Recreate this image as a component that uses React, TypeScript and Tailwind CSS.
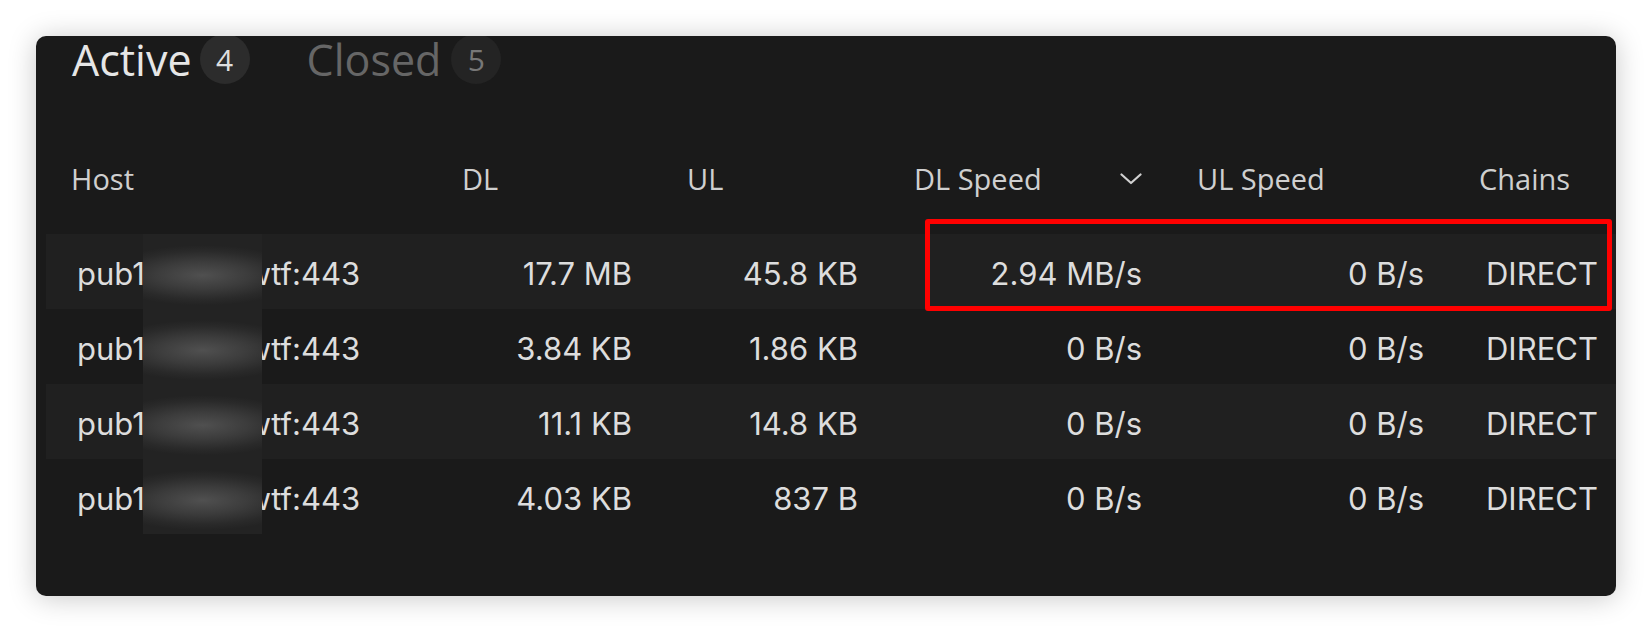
const rows = [
  { dl: "17.7 MB", ul: "45.8 KB", dls: "2.94 MB/s", uls: "0 B/s", striped: true },
  { dl: "3.84 KB", ul: "1.86 KB", dls: "0 B/s", uls: "0 B/s", striped: false },
  { dl: "11.1 KB", ul: "14.8 KB", dls: "0 B/s", uls: "0 B/s", striped: true },
  { dl: "4.03 KB", ul: "837 B", dls: "0 B/s", uls: "0 B/s", striped: false },
];

const cols = "grid grid-cols-[391px_225px_227px_283px_282px_160px]";

const Chevron = () => (
  <svg width="22" height="12" viewBox="0 0 22 12" fill="none">
    <polyline
      points="1.5,1.5 11,10 20.5,1.5"
      stroke="#d0d0d0"
      strokeWidth="2.2"
      strokeLinecap="round"
      strokeLinejoin="round"
    />
  </svg>
);

const Connections = function () {
  return (
    <div className="min-h-[632px] w-[1652px] bg-white pl-[36px] pt-[36px]">
      <div className="relative h-[560px] w-[1580px] overflow-hidden rounded-[10px] bg-[#1a1a1a] shadow-[0_2px_28px_rgba(0,0,0,0.22)]">
        {/* tabs */}
        <div className="mt-[-2px] flex h-[50px] items-center gap-[57px] pl-[36px] font-['Open_Sans',sans-serif]">
          <div className="flex items-center">
            <span className="text-[43px] leading-[43px] text-[#e6e6e6]">Active</span>
            <span className="ml-[8px] flex h-[50px] w-[50px] items-center justify-center rounded-full bg-[#2c2c2c] text-[30px] text-[#dedede]">
              4
            </span>
          </div>
          <div className="flex items-center">
            <span className="text-[43px] leading-[43px] text-[#666666]">Closed</span>
            <span className="ml-[10px] flex h-[50px] w-[50px] items-center justify-center rounded-full bg-[#242424] text-[30px] text-[#777777]">
              5
            </span>
          </div>
        </div>

        {/* table */}
        <div className="ml-[10px] mt-[67px]">
          <div className={`${cols} h-[56px] items-center font-['Open_Sans',sans-serif] text-[29px] text-[#cfcfcf]`}>
            <div className="pl-[25px]">Host</div>
            <div className="pl-[25px]">DL</div>
            <div className="pl-[25px]">UL</div>
            <div className="flex items-center justify-between pl-[25px] pr-[30px]">
              <span>DL Speed</span>
              <Chevron />
            </div>
            <div className="pl-[25px]">UL Speed</div>
            <div className="pl-[25px]">Chains</div>
          </div>

          <div className="mt-[27px] font-['Inter',sans-serif] text-[31px] text-[#dddddd]">
            {rows.map((r, i) => (
              <div
                key={i}
                className={`${cols} h-[75px] items-stretch ${r.striped ? "bg-[#202020]" : ""}`}
              >
                <div className="flex items-stretch pl-[31px]">
                  <span className="self-center pt-[6px]">pub1</span>
                  <span className="relative z-10 -ml-[2px] -mr-[16px] w-[119px] bg-[radial-gradient(ellipse_85%_40%_at_50%_55%,#505050,#3c3c3c_45%,#2a2a2a_80%,#232323)]" />
                  <span className="self-center pt-[6px]">wtf:443</span>
                </div>
                <div className="flex items-center justify-end pr-[30px] pt-[6px]">{r.dl}</div>
                <div className="flex items-center justify-end pr-[31px] pt-[6px]">{r.ul}</div>
                <div className="flex items-center justify-end pr-[30px] pt-[6px]">{r.dls}</div>
                <div className="flex items-center justify-end pr-[30px] pt-[6px]">{r.uls}</div>
                <div className="flex items-center pl-[32px] pt-[6px]">DIRECT</div>
              </div>
            ))}
          </div>
        </div>

        {/* highlight annotation */}
        <div className="absolute left-[889px] top-[183px] h-[92px] w-[687px] rounded-[3px] border-[5px] border-[#ff0000]" />
      </div>
    </div>
  );
};

export default function App() {
  return <Connections />;
}
